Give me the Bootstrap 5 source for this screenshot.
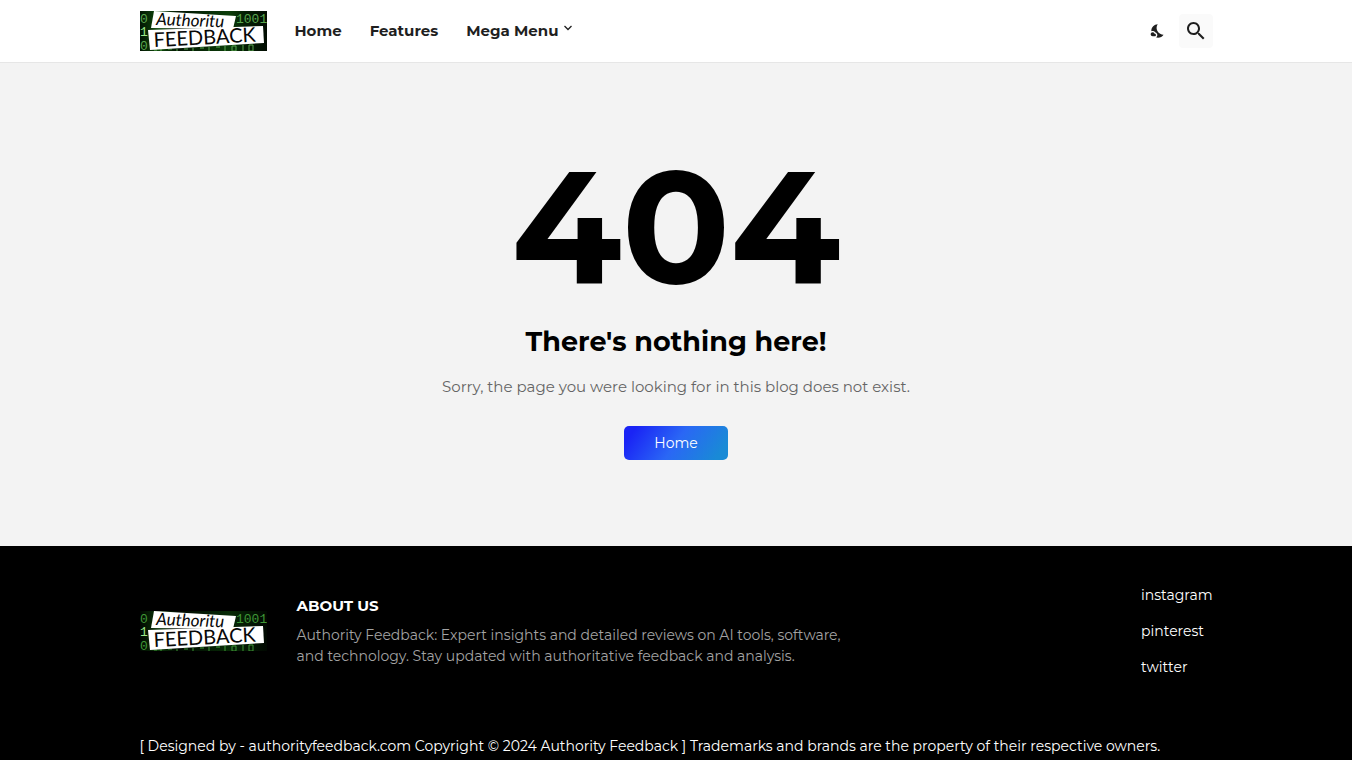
<!DOCTYPE html>
<html lang="en">
<head>
<meta charset="utf-8">
<meta name="viewport" content="width=device-width, initial-scale=1">
<title>Authority Feedback</title>
<link href="https://cdn.jsdelivr.net/npm/bootstrap@5.3.0/dist/css/bootstrap.min.css" rel="stylesheet">
<style>
body{font-family:Montserrat,Inter,"Open Sans",sans-serif;font-size:15px;background:#f3f3f3;color:#000}
.page-wrap{width:100%;max-width:1073px;margin-inline:auto}
.site-header{background:#fff;height:63px;border-bottom:1px solid #e6e6e6}
.site-logo{width:127px;height:40px;display:block}
.main-menu{gap:28px;margin-left:28px}
.main-menu a{color:#1f1f1f;font-size:15px;font-weight:700;line-height:24px}
.tool-btn{color:#1f1f1f;border:0;border-radius:4px;width:34px;height:34px;background:transparent}
.tool-search{background:#fafafa}
.error-area{padding:67px 16px 86px}
.error-code{font-size:160px;line-height:192px;font-weight:700;margin:0}
.error-title{font-size:27px;line-height:40px;font-weight:700;margin:0 0 13px}
.error-text{font-size:15px;line-height:24px;color:#656565;margin:0 0 27px}
.home-btn{--bs-btn-color:#fff;--bs-btn-hover-color:#fff;width:104px;height:34px;padding:0;line-height:34px;border:0;border-radius:5px;font-size:14px;background:linear-gradient(125deg,#1a24f5 10%,#2a67f5 50%,#198ad6 90%)}
.site-footer{background:#000;color:#fff;padding:37px 0 3px}
.about-box{margin-left:30px}
.about-title{font-size:15px;line-height:20px;font-weight:700;margin:0 0 9px}
.about-text{font-size:14px;line-height:21px;color:#a3a3a3;margin:0;max-width:560px}
.social-list{gap:12px;font-size:14px;line-height:24px}
.credits{font-size:14px;line-height:22px;margin:56px 0 0}
</style>
</head>
<body>
<header class="site-header d-flex align-items-center">
  <div class="page-wrap d-flex align-items-center">
    <a href="#" aria-label="Authority Feedback">
      <svg class="site-logo" viewBox="0 0 127 40">
        <defs>
          <linearGradient id="glowTop">
            <stop offset="0" stop-color="#031503"/><stop offset=".15" stop-color="#0e4b0b"/><stop offset=".3" stop-color="#031503"/><stop offset=".7" stop-color="#0b3d09"/><stop offset=".82" stop-color="#042004"/><stop offset="1" stop-color="#020d02"/>
          </linearGradient>
        </defs>
        <rect width="127" height="40" fill="url(#glowTop)"/>
        <g font-family="Liberation Mono, monospace" font-size="13" fill="#59a64e">
          <text x="0" y="12">0</text><text x="96" y="12">1001</text><text x="0" y="25" fill="#9be888">1</text><text x="0" y="39">0</text>
        </g>
        <path d="M14 39h3m4-1v2m7-2h4m5 0v2m7-2h4m5-1v3m7-3h4m5-1v4m7-4h4m5-1v5m7-5h4v5h-4zm11-1v6m6-6h4v6h-4z" fill="none" stroke="#59a64e"/>
        <path d="M14 0l82 5-3 13-82-1z" fill="#fff"/><path d="M8 19l115-4 1 17-114 7z" fill="#fff"/>
        <g fill="#080808" font-family="Lato, sans-serif">
          <text x="16" y="14" font-size="17" font-style="italic" transform="rotate(2 16 14)">Authoritu</text>
          <text x="14" y="36" font-size="20" transform="rotate(-3 14 36)">FEEDBACK</text>
        </g>
      </svg>
    </a>
    <nav class="main-menu d-flex" aria-label="Main">
      <a class="text-decoration-none" href="#">Home</a>
      <a class="text-decoration-none" href="#">Features</a>
      <a class="text-decoration-none d-flex" href="#">Mega Menu
        <svg class="ms-1 mt-1" width="12" height="12" viewBox="0 0 12 12" fill="none" stroke="currentColor" stroke-width="1.3" aria-hidden="true"><path d="M2.5 3L6 6.5 9.5 3"/></svg>
      </a>
    </nav>
    <div class="d-flex ms-auto gap-1">
      <button type="button" class="tool-btn d-flex align-items-center justify-content-center p-0" aria-label="Dark mode">
        <svg width="16" height="16" viewBox="0 0 24 24" fill="currentColor"><path d="M11.1 12.08c-2.33-4.51-.5-8.48.53-10.07C6.27 2.2 1.98 6.59 1.98 12c0 .14.02.28.02.42.62-.27 1.29-.42 2-.42 1.66 0 3.18.83 4.1 2.15C9.77 14.63 11 16.17 11 18c0 1.52-.87 2.83-2.12 3.51.98.32 2.03.5 3.11.5 3.5 0 6.58-1.8 8.37-4.52-2.36.23-6.98-.97-9.26-5.41z"/><path d="M7 16h-.18C6.4 14.84 5.3 14 4 14c-1.66 0-3 1.34-3 3s1.34 3 3 3h3c1.1 0 2-.9 2-2s-.9-2-2-2z"/></svg>
      </button>
      <button type="button" class="tool-btn tool-search d-flex align-items-center justify-content-center p-0" aria-label="Search">
        <svg width="24" height="24" viewBox="0 0 24 24" fill="currentColor"><path d="M15.5 14h-.79l-.28-.27C15.41 12.59 16 11.11 16 9.5 16 5.91 13.09 3 9.5 3S3 5.91 3 9.5 5.91 16 9.5 16c1.61 0 3.09-.59 4.23-1.57l.27.28v.79l5 4.99L20.49 19l-4.99-5zm-6 0C7.01 14 5 11.99 5 9.5S7.01 5 9.5 5 14 7.01 14 9.5 11.99 14 9.5 14z"/></svg>
      </button>
    </div>
  </div>
</header>
<main class="error-area text-center">
  <h1 class="error-code">404</h1>
  <h2 class="error-title">There's nothing here!</h2>
  <p class="error-text">Sorry, the page you were looking for in this blog does not exist.</p>
  <a class="btn home-btn" href="#">Home</a>
</main>
<footer class="site-footer">
  <div class="page-wrap">
    <div class="d-flex align-items-center">
      <a href="#" aria-label="Authority Feedback">
        <svg class="site-logo" viewBox="0 0 127 40">
          <defs>
            <linearGradient id="glowFoot">
              <stop offset="0" stop-color="#010801"/><stop offset=".15" stop-color="#0a3608"/><stop offset=".3" stop-color="#010801"/><stop offset=".7" stop-color="#072a06"/><stop offset="1" stop-color="#010801"/>
            </linearGradient>
          </defs>
          <rect width="127" height="40" fill="url(#glowFoot)"/>
          <g font-family="Liberation Mono, monospace" font-size="13" fill="#3f9636">
            <text x="0" y="12">0</text><text x="96" y="12">1001</text><text x="0" y="25" fill="#9be888">1</text><text x="0" y="39">0</text>
          </g>
          <path d="M14 39h3m4-1v2m7-2h4m5 0v2m7-2h4m5-1v3m7-3h4m5-1v4m7-4h4m5-1v5m7-5h4v5h-4zm11-1v6m6-6h4v6h-4z" fill="none" stroke="#3f9636"/>
          <path d="M14 0l82 5-3 13-82-1z" fill="#fff"/><path d="M8 19l115-4 1 17-114 7z" fill="#fff"/>
          <g fill="#080808" font-family="Lato, sans-serif">
            <text x="16" y="14" font-size="17" font-style="italic" transform="rotate(2 16 14)">Authoritu</text>
            <text x="14" y="36" font-size="20" transform="rotate(-3 14 36)">FEEDBACK</text>
          </g>
        </svg>
      </a>
      <div class="about-box">
        <h3 class="about-title">ABOUT US</h3>
        <p class="about-text">Authority Feedback: Expert insights and detailed reviews on AI tools, software, and technology. Stay updated with authoritative feedback and analysis.</p>
      </div>
      <ul class="social-list list-unstyled d-flex flex-column ms-auto mb-0">
        <li><a class="text-white text-decoration-none" href="#">instagram</a></li>
        <li><a class="text-white text-decoration-none" href="#">pinterest</a></li>
        <li><a class="text-white text-decoration-none" href="#">twitter</a></li>
      </ul>
    </div>
    <p class="credits">[ Designed by - authorityfeedback.com Copyright © 2024 Authority Feedback ] Trademarks and brands are the property of their respective owners.</p>
  </div>
</footer>
<script src="https://cdn.jsdelivr.net/npm/bootstrap@5.3.0/dist/js/bootstrap.bundle.min.js"></script>
</body>
</html>
